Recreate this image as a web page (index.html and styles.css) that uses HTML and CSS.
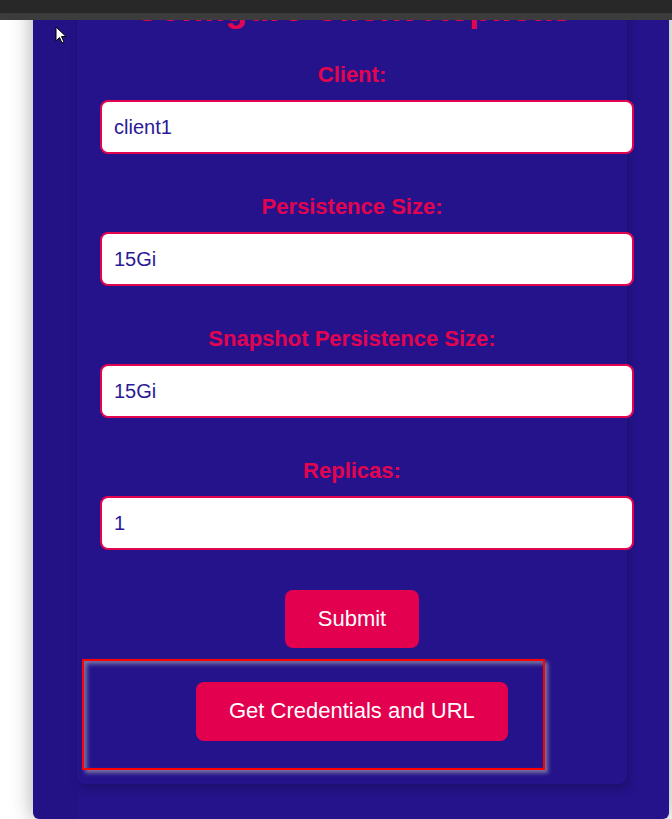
FILE: index.html
```html
<!DOCTYPE html>
<html lang="en">
<head>
<meta charset="utf-8">
<title>Configure Client Replicas</title>
<link rel="stylesheet" href="styles.css">
</head>
<body>
<div class="topbar"><div class="topbar-dark"></div><div class="topbar-light"></div></div>
<svg class="cursor" width="12" height="19" viewBox="0 0 12 19"><path d="M1 1 L1 15 L4.5 11.5 L7 17 L9 16 L6.5 10.5 L11 10.5 Z" fill="#fff" stroke="#000" stroke-width="1"/></svg>
<div class="panel">
  <div class="card">
    <h2 class="title">Configure Client Replicas</h2>
    <form class="form">
      <div class="field">
        <label class="label">Client:</label>
        <input class="input" type="text" value="client1">
      </div>
      <div class="field">
        <label class="label">Persistence Size:</label>
        <input class="input" type="text" value="15Gi">
      </div>
      <div class="field">
        <label class="label">Snapshot Persistence Size:</label>
        <input class="input" type="text" value="15Gi">
      </div>
      <div class="field">
        <label class="label">Replicas:</label>
        <input class="input" type="text" value="1">
      </div>
      <div class="submit-row"><button class="btn" type="button">Submit</button></div>
    </form>
    <div class="cred-box">
      <button class="btn" type="button">Get Credentials and URL</button>
    </div>
  </div>
</div>
</body>
</html>
```
FILE: styles.css
```css
html, body {
  margin: 0;
  padding: 0;
  background: #ffffff;
  font-family: "Liberation Sans", Arial, sans-serif;
}
.topbar {
  position: fixed;
  top: 0;
  left: 0;
  right: 0;
  z-index: 10;
}
.topbar-dark { height: 13px; background: #282828; }
.topbar-light { height: 7px; background: #3c3c3c; }
.cursor {
  position: absolute;
  top: 26px;
  left: 55px;
  z-index: 11;
}
.panel {
  margin-top: -40px;
  margin-left: 33px;
  width: 636px;
  padding-top: 20px;
  padding-bottom: 35px;
  background: linear-gradient(to right, #231286 0, #231286 44px, #24138b 44px);
  border-radius: 0 0 6px 6px;
  box-shadow: 0 0 22px rgba(0, 0, 0, 0.35);
}
.card {
  margin-left: 44px;
  width: 550px;
  padding-bottom: 14px;
  background: #24138b;
  border-radius: 8px;
  box-shadow: 2px 5px 10px rgba(0, 0, 0, 0.22);
}
.title {
  margin: 0;
  padding-top: 7px;
  font-size: 36px;
  line-height: 44px;
  font-weight: bold;
  color: #e3044f;
  text-align: center;
  white-space: nowrap;
}
.form { margin: 0; padding-top: 31px; }
.field { margin-bottom: 40px; }
.field:last-of-type { margin-bottom: 39px; }
.label {
  display: block;
  font-size: 22px;
  line-height: 25px;
  font-weight: bold;
  color: #e3044f;
  text-align: center;
  margin-bottom: 13px;
}
.input {
  display: block;
  box-sizing: border-box;
  margin-left: 23px;
  width: 534px;
  height: 54px;
  padding: 0 12px;
  border: 2px solid #e3044f;
  border-radius: 8px;
  background: #ffffff;
  color: #2a1a96;
  font-family: "Liberation Sans", Arial, sans-serif;
  font-size: 20px;
  outline: none;
}
.submit-row { text-align: center; }
.btn {
  background: #e3004f;
  color: #ffffff;
  border: none;
  border-radius: 8px;
  font-family: "Liberation Sans", Arial, sans-serif;
  font-size: 22px;
  line-height: 26px;
  padding: 16px 33px;
  cursor: pointer;
}
.cred-box {
  box-sizing: border-box;
  margin-top: 11px;
  margin-left: 5px;
  width: 463px;
  height: 111px;
  padding: 21px 0 0 112px;
  border: 2px solid #ff0000;
  box-shadow: inset 3px 3px 4px rgba(150, 150, 170, 0.75), 3px 3px 4px rgba(150, 150, 170, 0.75);
}
.cred-box .btn { padding: 16px 33px 17px; }
```
